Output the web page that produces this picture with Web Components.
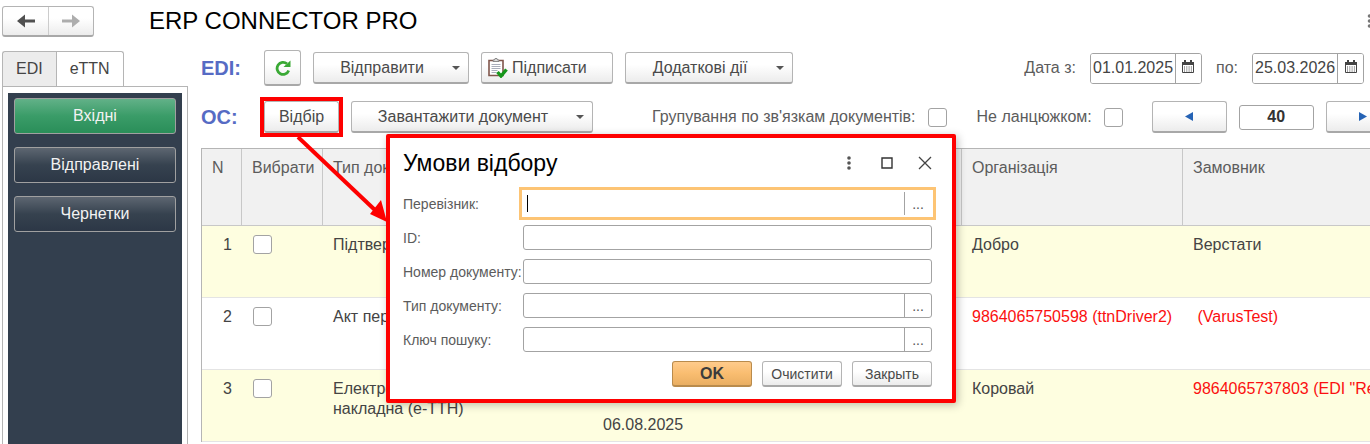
<!DOCTYPE html>
<html lang="uk">
<head>
<meta charset="utf-8">
<title>ERP CONNECTOR PRO</title>
<style>
    html, body { height: 100%; }
    body {
        margin: 0;
        overflow: hidden;
        background: #fff;
        color: #444;
        font-family: "Liberation Sans", Arial, sans-serif;
        font-size: 16px;
        line-height: 20px;
    }
</style>
</head>
<body>
<erp-app></erp-app>

<script>
// Push button. Attributes: variant (small, primary, icon, picture, dark, green), menu, highlighted
class ErpButton extends HTMLElement {
    constructor() {
        super();
        this.attachShadow({ mode: 'open' });
    }

    connectedCallback() {
        const label = this.getAttribute('label');
        const menu = this.hasAttribute('menu');
        this.shadowRoot.innerHTML = `
        <style>
            :host { display: block; flex: none; }
            :host([highlighted]) { outline: 4px solid #fe0000; }
            button {
                box-sizing: border-box;
                display: flex;
                align-items: center;
                justify-content: center;
                gap: 6px;
                width: 100%;
                height: 32px;
                padding: 0 8px;
                border: 1px solid #b4b4b4;
                border-bottom: 2px solid #a8a8a8;
                border-radius: 3px;
                background: linear-gradient(#fff 40%, #ececec);
                color: #4a4a4a;
                font: inherit;
                white-space: nowrap;
            }
            .text:not(:has(slot)) { display: none; }
            :host([menu]) .text { flex: 1; text-align: center; }
            :host([menu]) button { padding: 0 8px 0 4px; }
            :host([variant="icon"]) button { gap: 0; height: 36px; }
            :host([variant="picture"]) button { justify-content: flex-start; gap: 4px; padding: 0 6px; }
            :host([variant="small"]) button,
            :host([variant="primary"]) button { height: 26px; font-size: 14px; }
            :host([variant="primary"]) button {
                border-color: #b98b4c;
                background: linear-gradient(#ffcb8b, #f9bd70 50%, #e9ae62);
                color: #3c3c3c;
                font-size: 16px;
                font-weight: bold;
            }
            :host([variant="dark"]) button,
            :host([variant="green"]) button {
                height: 36px;
                border: 1px solid #a0a0a0;
                background: linear-gradient(#5d6671, #36424f 50%, #2c3746);
                color: #f2f2f2;
            }
            :host([variant="green"]) button { background: linear-gradient(#62b188, #3a9c68 50%, #2a8e59); }
        </style>
        <button type="button" ${label ? `aria-label="${label}"` : ''} ${menu ? 'aria-haspopup="menu"' : ''}>
            <slot name="icon"></slot>
            <span class="text">${label ? '' : '<slot></slot>'}</span>
            ${menu ? '<svg width="8" height="4" viewBox="0 0 8 4"><path d="M0 0h8L4 4z" fill="#555"/></svg>' : ''}
        </button>
        `;
    }
}

// Label + tick box
class ErpCheck extends HTMLElement {
    constructor() {
        super();
        this.attachShadow({ mode: 'open' });
    }

    connectedCallback() {
        this.shadowRoot.innerHTML = `
        <style>
            :host { display: flex; align-items: center; gap: 12px; color: #5c5c5c; white-space: nowrap; }
            input {
                appearance: none;
                box-sizing: border-box;
                width: 19px;
                height: 19px;
                margin: 0;
                border: 1px solid #a3a3a3;
                border-radius: 3px;
                background: #fff;
            }
        </style>
        <label for="box"><slot></slot></label>
        <input id="box" type="checkbox">
        `;
    }
}

// Date box with a calendar button
class ErpDate extends HTMLElement {
    constructor() {
        super();
        this.attachShadow({ mode: 'open' });
    }

    connectedCallback() {
        this.shadowRoot.innerHTML = `
        <style>
            :host { display: flex; align-items: center; gap: 14px; color: #5c5c5c; }
            .box {
                box-sizing: border-box;
                display: flex;
                width: 112px;
                height: 31px;
                border: 1px solid #a3a3a3;
                border-radius: 3px;
                overflow: hidden;
            }
            input {
                flex: 1;
                min-width: 0;
                padding: 0 0 0 2px;
                border: 0;
                color: #444;
                font: inherit;
            }
            button {
                width: 26px;
                padding: 0;
                border: 0;
                border-left: 1px solid #a3a3a3;
                background: #fff;
            }
        </style>
        <label for="date"><slot></slot></label>
        <div class="box">
            <input id="date" type="text" value="${this.getAttribute('value')}">
            <button type="button" aria-label="Календар">
                <svg width="12" height="13" viewBox="0 0 12 13">
                    <path d="M.5 2.500h11v10H.5z" fill="#fff" stroke="#444"/>
                    <path d="M0 2h12v3H0zM2 0h2v3H2zM8 0h2v3H8z" fill="#444"/>
                    <path d="M2 7h8M2 9h8M2 11h8" stroke="#444" stroke-dasharray="1 1.300"/>
                </svg>
            </button>
        </div>
        `;
    }
}

// One line of the filter dialog. Attributes: label, picker, active
class FilterField extends HTMLElement {
    constructor() {
        super();
        this.attachShadow({ mode: 'open' });
    }

    connectedCallback() {
        this.shadowRoot.innerHTML = `
        <style>
            :host { display: grid; grid-template-columns: 120px 1fr; align-items: center; font-size: 14px; }
            label { color: #5c5c5c; white-space: nowrap; }
            .box {
                box-sizing: border-box;
                display: flex;
                height: 25px;
                border: 1px solid #a3a3a3;
                border-radius: 3px;
                background: #fff;
            }
            :host([active]) .box { border-color: transparent; outline: 3px solid #fdc474; outline-offset: 1px; border-radius: 0; }
            input { flex: 1; min-width: 0; padding: 0 4px; border: 0; background: none; font: inherit; outline: 0; }
            :host([active]) input { background: linear-gradient(#000, #000) 3px 3px / 1px 17px no-repeat; }
            button {
                width: 27px;
                padding: 0;
                border: 0;
                border-left: 1px solid #a3a3a3;
                background: none;
                color: #555;
                font: inherit;
            }
        </style>
        <label for="value">${this.getAttribute('label')}</label>
        <div class="box">
            <input id="value" type="text">
            ${this.hasAttribute('picker') ? '<button type="button">...</button>' : ''}
        </div>
        `;
    }
}

class FilterDialog extends HTMLElement {
    constructor() {
        super();
        this.attachShadow({ mode: 'open' });
    }

    connectedCallback() {
        this.shadowRoot.innerHTML = `
        <style>
            :host {
                box-sizing: border-box;
                display: block;
                width: 570px;
                padding: 9px 20px 12px 13px;
                border: 4px solid #fe0000;
                border-radius: 2px;
                background: #fff;
                box-shadow: 2px 2px 8px rgba(0, 0, 0, 0.25);
            }
            header { display: flex; align-items: center; height: 32px; margin-bottom: 12px; }
            h2 { flex: 1; margin: 0; color: #000; font-size: 23px; font-weight: normal; line-height: 28px; }
            header button { width: 38px; height: 24px; padding: 0; border: 0; background: none; }
            header svg { display: block; margin: auto; }
            header button:last-child { width: 14px; margin-left: 12px; }
            form { display: flex; flex-direction: column; gap: 9px; }
            footer { display: flex; justify-content: flex-end; gap: 10px; }
            footer erp-button { width: 80px; }
        </style>
        <header>
            <h2>Умови відбору</h2>
            <button type="button" aria-label="Ще">
                <svg width="4" height="14" viewBox="0 0 4 14" fill="#555"><circle cx="2" cy="2" r="1.800"/><circle cx="2" cy="7" r="1.800"/><circle cx="2" cy="12" r="1.800"/></svg>
            </button>
            <button type="button" aria-label="Розгорнути">
                <svg width="12" height="12" viewBox="0 0 12 12"><path d="M1 1h10v10H1z" fill="none" stroke="#333" stroke-width="1.400"/></svg>
            </button>
            <button type="button" aria-label="Закрити вікно">
                <svg width="14" height="14" viewBox="0 0 14 14"><path d="M1 1l12 12M13 1L1 13" stroke="#444" stroke-width="1.300"/></svg>
            </button>
        </header>
        <form>
            <filter-field label="Перевізник:" picker active></filter-field>
            <filter-field label="ID:"></filter-field>
            <filter-field label="Номер документу:"></filter-field>
            <filter-field label="Тип документу:" picker></filter-field>
            <filter-field label="Ключ пошуку:" picker></filter-field>
            <footer>
                <erp-button variant="primary">OK</erp-button>
                <erp-button variant="small">Очистити</erp-button>
                <erp-button variant="small">Закрыть</erp-button>
            </footer>
        </form>
        `;
    }
}

class ErpSidebar extends HTMLElement {
    constructor() {
        super();
        this.attachShadow({ mode: 'open' });
    }

    connectedCallback() {
        this.shadowRoot.innerHTML = `
        <style>
            :host { display: flex; flex-direction: column; }
            .tabs { display: flex; }
            .tabs button {
                box-sizing: border-box;
                height: 35px;
                padding: 0 13px;
                border: 1px solid #b5b5b5;
                border-bottom: 0;
                background: #ececec;
                color: #444;
                font: inherit;
            }
            .tabs button:first-child { border-right: 0; border-radius: 3px 0 0 0; }
            .tabs .active { margin-bottom: -1px; height: 36px; padding-bottom: 1px; border-radius: 0 3px 0 0; background: #fff; }
            .panel { flex: 1; padding: 6px 5px 0; border: 1px solid #b5b5b5; border-bottom: 0; }
            nav {
                box-sizing: border-box;
                display: flex;
                flex-direction: column;
                gap: 13px;
                height: 100%;
                padding: 5px 6px;
                background: #333f4e;
            }
        </style>
        <div class="tabs" role="tablist">
            <button type="button" role="tab">EDI</button>
            <button type="button" role="tab" class="active" aria-selected="true">eTTN</button>
        </div>
        <div class="panel">
            <nav>
                <erp-button variant="green">Вхідні</erp-button>
                <erp-button variant="dark">Відправлені</erp-button>
                <erp-button variant="dark">Чернетки</erp-button>
            </nav>
        </div>
        `;
    }
}

class ErpToolbar extends HTMLElement {
    constructor() {
        super();
        this.attachShadow({ mode: 'open' });
    }

    connectedCallback() {
        this.shadowRoot.innerHTML = `
        <style>
            :host { display: flex; flex-direction: column; gap: 14px; padding-bottom: 14px; }
            .row { display: flex; align-items: center; gap: 12px; height: 36px; }
            .row + .row { height: 34px; }
            .name { flex: none; width: 51px; color: #566bc4; font-size: 20px; font-weight: bold; }
            .dates { display: flex; gap: 14px; margin-left: auto; padding-right: 6px; }
            .checks { display: flex; flex: none; gap: 30px; margin: 0 17px 0 47px; }
            .w36 { width: 37px; }
            .w74 { width: 75px; }
            .w132 { width: 132px; }
            .w156 { width: 156px; }
            .w168 { width: 168px; }
            .w242 { width: 242px; }
            .count {
                box-sizing: border-box;
                flex: none;
                width: 75px;
                height: 25px;
                border: 1px solid #a3a3a3;
                border-radius: 3px;
                color: #333;
                font: inherit;
                font-weight: bold;
                text-align: center;
            }
        </style>
        <div class="row">
            <span class="name">EDI:</span>
            <erp-button class="w36" variant="icon" label="Оновити">
                <svg slot="icon" width="16" height="16" viewBox="0 0 16 16">
                    <path d="M12 3.800A6 6 0 1 0 13.700 10.500" fill="none" stroke="#3aa935" stroke-width="2.800"/>
                    <path d="M15.500 .5v6.500H8.500z" fill="#3aa935"/>
                </svg>
            </erp-button>
            <erp-button class="w156" menu>Відправити</erp-button>
            <erp-button class="w132" variant="picture">
                <svg slot="icon" width="20" height="20" viewBox="0 0 20 20">
                    <path d="M1 2.500h14v15H1z" fill="#fff" stroke="#80564b" stroke-width="1.600"/>
                    <path d="M5 3.500V2h1.500L7 .5h2L9.500 2H11v1.500z" fill="#ddd" stroke="#777" stroke-width=".8"/>
                    <path d="M3.500 6.500h9M3.500 8.500h9M3.500 10.500h9M3.500 12.500h6M3.500 14.500h5" stroke="#a9aebb"/>
                    <path d="M9.500 14l3.500 4L18.500 11.500" fill="none" stroke="#17971c" stroke-width="3.400"/>
                </svg>Підписати</erp-button>
            <erp-button class="w168" menu>Додаткові дії</erp-button>
            <div class="dates">
                <erp-date value="01.01.2025">Дата з:</erp-date>
                <erp-date value="25.03.2026">по:</erp-date>
            </div>
        </div>
        <div class="row">
            <span class="name">ОС:</span>
            <erp-button class="w74" highlighted>Відбір</erp-button>
            <erp-button class="w242" menu>Завантажити документ</erp-button>
            <div class="checks">
                <erp-check>Групування по зв'язкам документів:</erp-check>
                <erp-check>Не ланцюжком:</erp-check>
            </div>
            <erp-button class="w74" label="Назад">
                <svg slot="icon" width="8" height="9" viewBox="0 0 8 9"><path d="M8 0v9L0 4.500z" fill="#2563b5"/></svg>
            </erp-button>
            <input class="count" type="text" value="40" aria-label="Кількість">
            <erp-button class="w74" label="Вперед">
                <svg slot="icon" width="8" height="9" viewBox="0 0 8 9"><path d="M0 0v9l8-4.500z" fill="#2563b5"/></svg>
            </erp-button>
        </div>
        `;
    }
}

class DocumentGrid extends HTMLElement {
    constructor() {
        super();
        this.attachShadow({ mode: 'open' });
        this.rows = [
            { type: 'Підтвердження', date: '', org: 'Добро', customer: 'Верстати' },
            { type: 'Акт перевантаження', date: '', org: '9864065750598 (ttnDriver2)', orgRed: true, customer: '&nbsp;(VarusTest)', customerRed: true },
            { type: 'Електронна товарно-транспортна накладна (е-ТТН)', date: '06.08.2025', org: 'Коровай', customer: '9864065737803 (EDI "Re', customerRed: true }
        ];
    }

    connectedCallback() {
        this.shadowRoot.innerHTML = `
        <style>
            :host { display: block; }
            table {
                width: 100%;
                table-layout: fixed;
                border-collapse: separate;
                border-spacing: 0;
                border-top: 1px solid #b5b5b5;
                border-left: 1px solid #b5b5b5;
            }
            th, td {
                box-sizing: border-box;
                height: 72px;
                padding: 9px 0 0 10px;
                border-bottom: 1px solid #e4e4e4;
                vertical-align: top;
                text-align: left;
                font-weight: normal;
            }
            th {
                height: 77px;
                border-right: 1px solid #c8c8c8;
                border-bottom-color: #c8c8c8;
                background: #f1f1f1;
                color: #5c5c5c;
                white-space: nowrap;
                overflow: hidden;
            }
            th:last-child { border-right: 0; }
            tbody tr:nth-child(odd) { background: #fefee0; }
            .n { padding-right: 10px; text-align: right; }
            .date { padding-bottom: 6px; vertical-align: bottom; }
            .line { white-space: nowrap; }
            .red { color: #fb1010; }
            input {
                appearance: none;
                box-sizing: border-box;
                display: block;
                width: 19px;
                height: 19px;
                margin: 0 0 0 1px;
                border: 1px solid #a3a3a3;
                border-radius: 3px;
                background: #fff;
            }
        </style>
        <table>
            <colgroup>
                <col style="width: 40px"><col style="width: 81px"><col style="width: 270px">
                <col style="width: 369px"><col style="width: 221px"><col>
            </colgroup>
            <thead>
                <tr><th>N</th><th>Вибрати</th><th>Тип документа</th><th></th><th>Організація</th><th>Замовник</th></tr>
            </thead>
            <tbody>
                ${this.rows.map((row, i) => `
                <tr>
                    <td class="n">${i + 1}</td>
                    <td><input type="checkbox" aria-label="Вибрати ${i + 1}"></td>
                    <td>${row.type}</td>
                    <td class="date">${row.date}</td>
                    <td class="line ${row.orgRed ? 'red' : ''}">${row.org}</td>
                    <td class="line ${row.customerRed ? 'red' : ''}">${row.customer}</td>
                </tr>`).join('')}
            </tbody>
        </table>
        `;
    }
}

class ErpApp extends HTMLElement {
    constructor() {
        super();
        this.attachShadow({ mode: 'open' });
    }

    connectedCallback() {
        this.shadowRoot.innerHTML = `
        <style>
            :host { display: flex; flex-direction: column; position: relative; height: 100%; overflow: hidden; }
            header { display: flex; align-items: center; height: 42px; padding-left: 2px; margin-bottom: 8px; }
            .history {
                display: flex;
                border: 1px solid #b4b4b4;
                border-bottom: 2px solid #a8a8a8;
                border-radius: 3px;
                background: linear-gradient(#fff 40%, #ececec);
            }
            .history button { width: 45px; height: 28px; padding: 0; border: 0; background: none; }
            .history svg { display: block; margin: auto; }
            .history button + button { border-left: 1px solid #ccc; }
            h1 { flex: 1; margin: 0 0 0 55px; color: #000; font-size: 24px; font-weight: normal; line-height: 28px; }
            .more { width: 4px; height: 16px; padding: 0; border: 0; background: none; }
            .more svg { display: block; }
            .body { flex: 1; display: flex; min-height: 0; }
            erp-sidebar { flex: none; width: 186px; margin: 1px 13px 0 2px; }
            main { flex: 1; min-width: 0; }
            filter-dialog { position: absolute; left: 386px; top: 134px; }
            .arrow { position: absolute; left: 290px; top: 136px; }
        </style>
        <header>
            <div class="history">
                <button type="button" aria-label="Попередня">
                    <svg width="18" height="14" viewBox="0 0 18 14"><path d="M18 5.500H8V.5L0 7l8 6.500v-5h10z" fill="#505050"/></svg>
                </button>
                <button type="button" aria-label="Наступна">
                    <svg width="18" height="14" viewBox="0 0 18 14"><path d="M0 5.500h10V.5L18 7l-8 6.500v-5H0z" fill="#adadad"/></svg>
                </button>
            </div>
            <h1>ERP CONNECTOR PRO</h1>
            <button type="button" class="more" aria-label="Ще">
                <svg width="4" height="14" viewBox="0 0 4 14" fill="#777"><circle cx="3.500" cy="2" r="1.800"/><circle cx="3.500" cy="7" r="1.800"/><circle cx="3.500" cy="12" r="1.800"/></svg>
            </button>
        </header>
        <div class="body">
            <erp-sidebar></erp-sidebar>
            <main>
                <erp-toolbar></erp-toolbar>
                <document-grid></document-grid>
            </main>
        </div>
        <filter-dialog></filter-dialog>
        <svg class="arrow" width="98" height="88" viewBox="0 0 98 88">
            <path d="M8 1l78 74" stroke="#fe0000" stroke-width="4"/>
            <path d="M97 86L80 78l11-14z" fill="#fe0000"/>
        </svg>
        `;
    }
}

customElements.define('erp-button', ErpButton);
customElements.define('erp-check', ErpCheck);
customElements.define('erp-date', ErpDate);
customElements.define('filter-field', FilterField);
customElements.define('filter-dialog', FilterDialog);
customElements.define('erp-sidebar', ErpSidebar);
customElements.define('erp-toolbar', ErpToolbar);
customElements.define('document-grid', DocumentGrid);
customElements.define('erp-app', ErpApp);
</script>
</body>
</html>
